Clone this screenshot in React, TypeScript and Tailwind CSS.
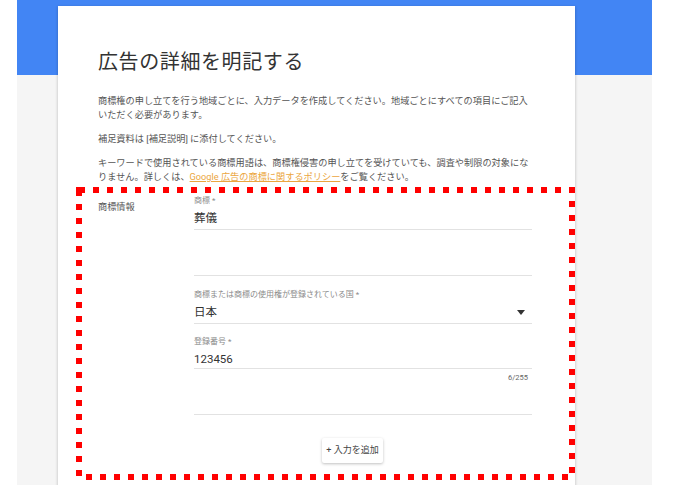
// App.tsx - Google Ads trademark form: "広告の詳細を明記する"
function Field({
  label,
  value,
  className,
  children,
}: {
  label: string;
  value: string;
  className: string;
  children?: React.ReactNode;
}) {
  return (
    <div className={`flex flex-col border-b border-[#e2e2e2] ${className}`}>
      <div className="h-[10px] text-[8px] leading-[10px] text-[#8a8a8a]">{label}</div>
      <div className="flex items-center justify-between h-[16px] mt-[4px] text-[11.5px] leading-[16px] text-[#333]">
        <span>{value}</span>
        {children}
      </div>
    </div>
  );
}

export default function App() {
  return (
    <div className="w-[680px] h-[485px] overflow-hidden bg-white font-['Roboto','Noto_Sans_CJK_JP',sans-serif]">
      <div className="ml-[17px] w-[635px] h-full pt-[6px] bg-[linear-gradient(to_bottom,#4285f4_75px,#f5f5f5_75px)]">
        <div className="ml-[41px] w-[517px] h-[600px] bg-white shadow-[0_1px_3px_rgba(0,0,0,0.25)]">
          <div className="pl-[40px] pr-[44px] pt-[42px]">
            <h1 className="text-[20px] leading-[28px] text-[#333] tracking-[0.6px]">広告の詳細を明記する</h1>
            <div className="mt-[18px] text-[9.2px] leading-[14px] text-[#555]">
              <p>
                商標権の申し立てを行う地域ごとに、入力データを作成してください。地域ごとにすべての項目にご記入いただく必要があります。
              </p>
              <p className="mt-[10px]">補足資料は [補足説明] に添付してください。</p>
              <p className="mt-[10px]">
                キーワードで使用されている商標用語は、商標権侵害の申し立てを受けていても、調査や制限の対象になりません。詳しくは、
                <span className="text-[#eba640] underline">Google 広告の商標に関するポリシー</span>
                をご覧ください。
              </p>
            </div>
          </div>

          <div className="relative mt-[3px] ml-[18px] w-[499px] h-[293px]">
            <svg className="absolute inset-0" width="499" height="293" viewBox="0 0 499 293">
              <rect
                x="3"
                y="3"
                width="493"
                height="287"
                fill="none"
                stroke="#ff0000"
                strokeWidth="6"
                strokeDasharray="6 8"
              />
            </svg>
            <div className="flex pl-[22px]">
              <div className="w-[96px] pt-[14px] text-[9.2px] leading-[12px] text-[#555]">商標情報</div>
              <div className="w-[338px] pt-[9px] flex flex-col">
                <Field label="商標 *" value="葬儀" className="h-[34px]" />
                <div className="h-[46px] border-b border-[#e2e2e2]" />
                <Field
                  label="商標または商標の使用権が登録されている国 *"
                  value="日本"
                  className="h-[48px] pt-[14px]"
                >
                  <svg width="8" height="5" viewBox="0 0 8 5" className="mr-[7px]">
                    <path d="M0 0h8L4 5z" fill="#333" />
                  </svg>
                </Field>
                <Field label="登録番号 *" value="123456" className="h-[45px] pt-[13px]" />
                <div className="h-[46px] border-b border-[#e2e2e2] flex justify-end pt-[4px] pr-[4px]">
                  <span className="text-[7.5px] leading-[10px] text-[#666]">6/255</span>
                </div>
                <div className="pl-[128px] pt-[21px]">
                  <button className="w-[61px] h-[25px] bg-white rounded-[2px] shadow-[0_1px_3px_rgba(0,0,0,0.25)] text-[9px] text-[#444]">
                    + 入力を追加
                  </button>
                </div>
              </div>
            </div>
          </div>
        </div>
      </div>
    </div>
  );
}
